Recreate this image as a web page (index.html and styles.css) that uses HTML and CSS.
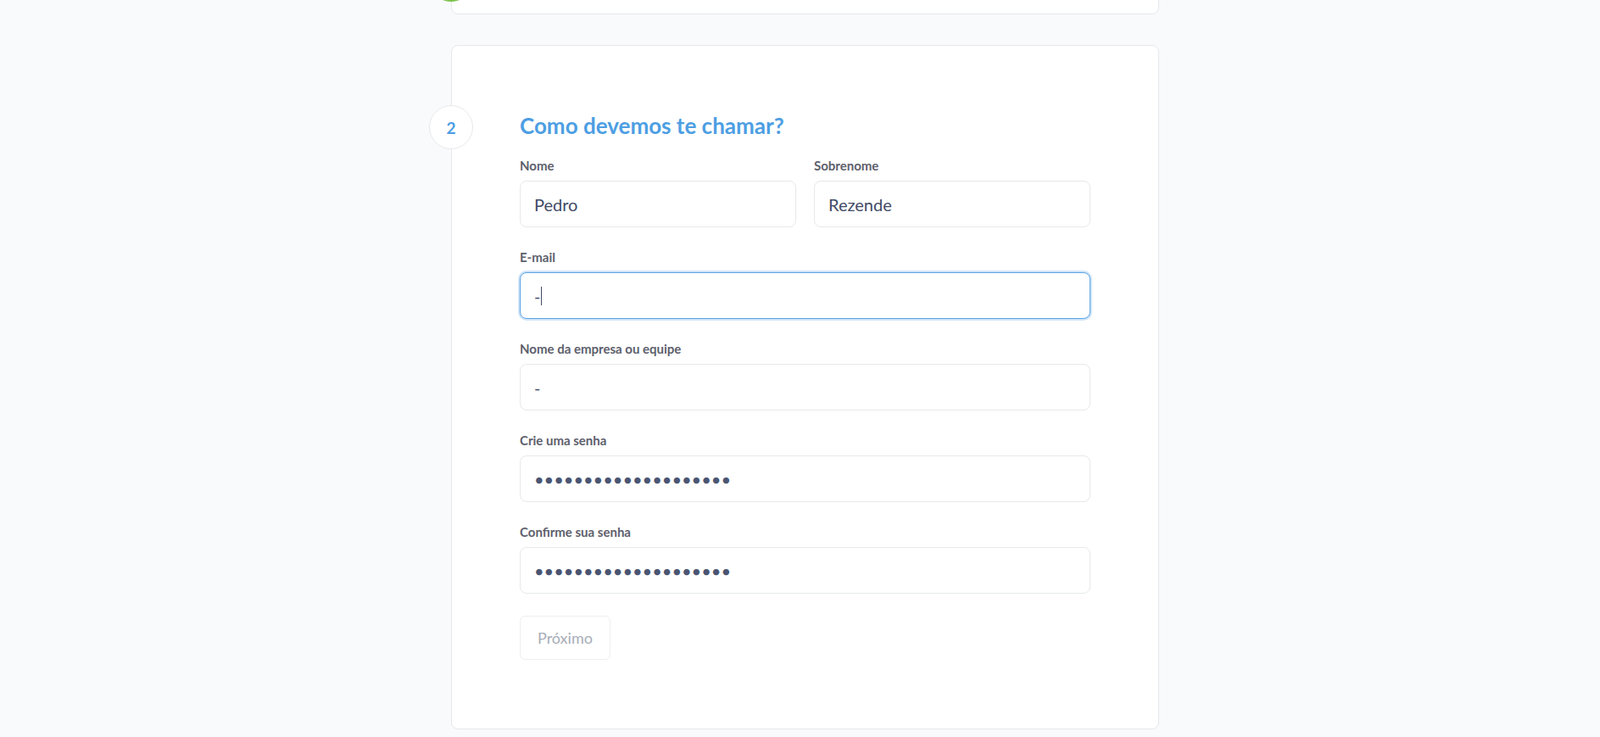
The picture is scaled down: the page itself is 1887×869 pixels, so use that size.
FILE: index.html
```html
<!DOCTYPE html>
<html lang="pt-BR">
<head>
<meta charset="utf-8">
<title>Cadastro</title>
<link rel="stylesheet" href="styles.css">
</head>
<body>
<div class="page">
  <section class="card card--done">
    <span class="step step--done"></span>
  </section>

  <section class="card card--active">
    <span class="step">2</span>
    <h2 class="title">Como devemos te chamar?</h2>
    <div class="row">
      <div class="field">
        <label class="label" for="nome">Nome</label>
        <input class="input" id="nome" type="text" value="Pedro">
      </div>
      <div class="field">
        <label class="label" for="sobrenome">Sobrenome</label>
        <input class="input" id="sobrenome" type="text" value="Rezende">
      </div>
    </div>
    <div class="field">
      <label class="label" for="email">E-mail</label>
      <div class="input input--focus" id="email"><span class="value">-</span><span class="caret"></span></div>
    </div>
    <div class="field">
      <label class="label" for="empresa">Nome da empresa ou equipe</label>
      <input class="input" id="empresa" type="text" value="-">
    </div>
    <div class="field">
      <label class="label" for="senha">Crie uma senha</label>
      <input class="input input--pass" id="senha" type="password" value="aaaaaaaaaaaaaaaaaaaa">
    </div>
    <div class="field">
      <label class="label" for="senha2">Confirme sua senha</label>
      <input class="input input--pass" id="senha2" type="password" value="aaaaaaaaaaaaaaaaaaaa">
    </div>
    <button class="btn" type="button">Próximo</button>
  </section>
</div>
</body>
</html>
```

FILE: styles.css
```css
* { box-sizing: border-box; }
html, body { margin: 0; }
body {
  background: #f9fafb;
  font-family: Lato, "Open Sans", sans-serif;
  color: #414a66;
}
.page {
  display: flex;
  flex-direction: column;
  align-items: center;
  padding-left: 12px;
  padding-bottom: 40px;
}
.card {
  position: relative;
  width: 835px;
  background: #fff;
  border: 1px solid #e6e8eb;
  border-radius: 8px;
}
.card--done {
  margin-top: -100px;
  height: 117px;
}
.card--active {
  margin-top: 36px;
  padding: 77px 80px 81px;
}
.step {
  position: absolute;
  left: -27px;
  top: 70px;
  width: 52px;
  height: 52px;
  border-radius: 50%;
  border: 1px solid #e8e9ec;
  background: #fff;
  display: flex;
  align-items: center;
  justify-content: center;
  color: #4d9ee3;
  font-size: 19px;
  font-weight: 700;
}
.step--done {
  top: 49px;
  background: #7cc24a;
  border-color: #7cc24a;
}
.title {
  margin: 0 0 21px;
  font-size: 26px;
  line-height: 34px;
  font-weight: 700;
  color: #4d9ee3;
}
.row {
  display: grid;
  grid-template-columns: 1fr 1fr;
  gap: 21px;
}
.field {
  margin-bottom: 26px;
}
.label {
  display: block;
  font-size: 15px;
  line-height: 18px;
  font-weight: 700;
  color: #5d606c;
  margin-bottom: 9px;
}
.input {
  display: flex;
  align-items: center;
  width: 100%;
  height: 55px;
  padding: 0 16px;
  border: 1px solid #e6e8eb;
  border-radius: 8px;
  background: #fff;
  font-family: Lato, "Open Sans", sans-serif;
  font-size: 20px;
  color: #414a66;
  outline: none;
}
.input--focus {
  border-color: #5ba3e5;
  box-shadow: 0 0 0 2px #cfe4f7;
}
.caret {
  display: inline-block;
  width: 1px;
  height: 22px;
  background: #414a66;
  margin-left: 1px;
}
.input--pass {
  color: #4a5572;
}
.btn {
  margin-top: 0;
  height: 52px;
  padding: 0 20px;
  border: 1px solid #eceef1;
  border-radius: 6px;
  background: #fff;
  color: #a7acb8;
  font-family: Lato, "Open Sans", sans-serif;
  font-size: 18px;
}
```
